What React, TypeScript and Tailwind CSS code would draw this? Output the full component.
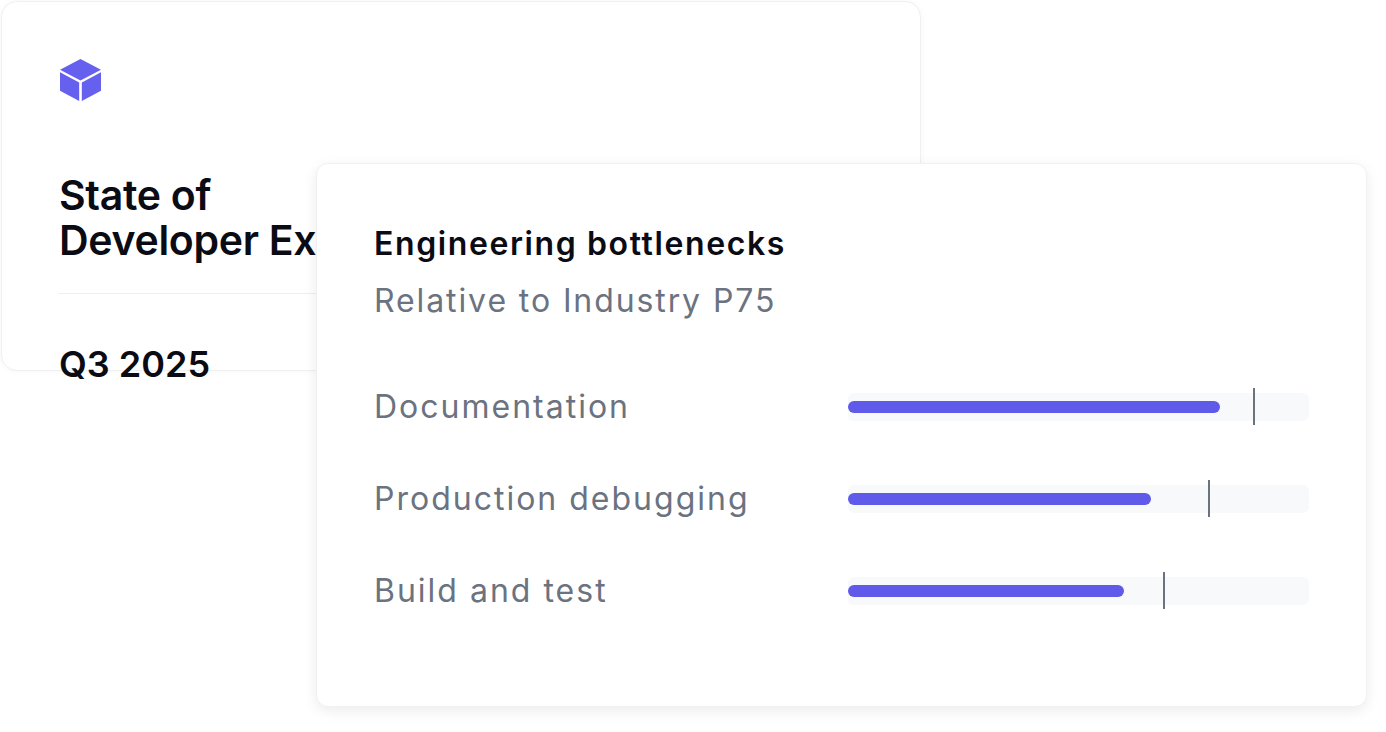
export default function App() {
  const rows = [
    { label: "Documentation", bar: 372, marker: 405 },
    { label: "Production debugging", bar: 303, marker: 360 },
    { label: "Build and test", bar: 276, marker: 315 },
  ];
  return (
    <div className="relative w-[1386px] h-[732px] bg-white overflow-hidden" style={{ fontFamily: "Inter, 'Noto Sans', sans-serif" }}>
      <div className="absolute left-[1px] top-[1px] w-[920px] h-[370px] rounded-2xl border border-[#f0f0f2] bg-white shadow-[0_0_6px_rgba(0,0,0,0.04)] px-[57px] pt-[57px]">
        <svg width="41" height="42" viewBox="0 0 40 41" className="ml-[1px]">
          <path d="M20 0 L40 10.5 L20 21 L0 10.5 Z" fill="#6660ee" />
          <path d="M0 13 L18.7 23 L18.7 41 L0 31 Z" fill="#6660ee" />
          <path d="M40 13 L21.3 23 L21.3 41 L40 31 Z" fill="#6660ee" />
        </svg>
        <h1 className="mt-[72px] text-[41px] leading-[45px] font-semibold text-[#0b0b14] tracking-[-0.3px]">
          State of<br />Developer Experience
        </h1>
        <div className="mt-[30px] h-px bg-[#eeeef0]" />
        <div className="mt-[43px] text-[36px] font-semibold text-[#0b0b14]">Q3 2025</div>
      </div>
      <div className="absolute left-[316px] top-[163px] w-[1051px] h-[544px] rounded-xl bg-white border border-[#f1f1f3] shadow-[0_4px_14px_rgba(0,0,0,0.08)] pl-[57px] pr-[57px] pt-[58px]">
        <div className="text-[32px] leading-[44px] font-semibold text-[#0b0b14] tracking-[1.6px]">Engineering bottlenecks</div>
        <div className="mt-[13px] text-[32px] leading-[44px] text-[#6b7280] tracking-[1.9px]">Relative to Industry P75</div>
        <div className="mt-[62px] flex flex-col gap-[48px]">
          {rows.map((r) => (
            <div key={r.label} className="flex items-center h-[44px]">
              <div className="w-[475px] text-[32px] leading-[44px] text-[#6b7280] tracking-[2px]">{r.label}</div>
              <div className="relative w-[462px] h-[28px] rounded-md bg-[#f8f9fb]">
                <div className="absolute left-0 top-[8px] h-[12px] rounded-full bg-[#5f5aea]" style={{ width: r.bar }} />
                <div className="absolute top-[-5px] w-[2px] h-[37px] bg-[#6b7280]" style={{ left: r.marker }} />
              </div>
            </div>
          ))}
        </div>
      </div>
    </div>
  );
}
